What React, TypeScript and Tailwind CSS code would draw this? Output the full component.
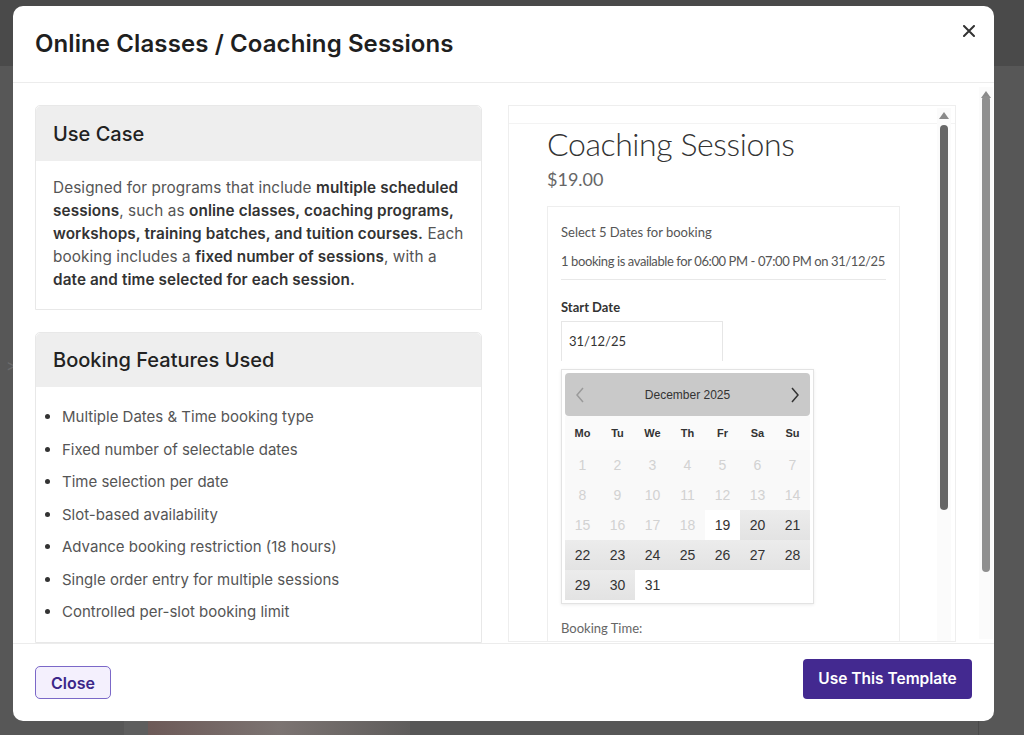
import React from 'react';

const features = [
  'Multiple Dates & Time booking type',
  'Fixed number of selectable dates',
  'Time selection per date',
  'Slot-based availability',
  'Advance booking restriction (18 hours)',
  'Single order entry for multiple sessions',
  'Controlled per-slot booking limit',
];

type Cell = { d?: number; kind: 'off' | 'open' | 'avail' | 'empty' };

const calendarRows: Cell[][] = [
  [1, 2, 3, 4, 5, 6, 7].map(d => ({ d, kind: 'off' as const })),
  [8, 9, 10, 11, 12, 13, 14].map(d => ({ d, kind: 'off' as const })),
  [
    { d: 15, kind: 'off' },
    { d: 16, kind: 'off' },
    { d: 17, kind: 'off' },
    { d: 18, kind: 'off' },
    { d: 19, kind: 'open' },
    { d: 20, kind: 'avail' },
    { d: 21, kind: 'avail' },
  ],
  [22, 23, 24, 25, 26, 27, 28].map(d => ({ d, kind: 'avail' as const })),
  [
    { d: 29, kind: 'avail' },
    { d: 30, kind: 'avail' },
    { d: 31, kind: 'open' },
    { kind: 'empty' },
    { kind: 'empty' },
    { kind: 'empty' },
    { kind: 'empty' },
  ],
];

const cellClass: Record<Cell['kind'], string> = {
  off: 'bg-[#f9f9f9] text-[#d2d2d2]',
  open: 'bg-white text-[#333]',
  avail: 'bg-gradient-to-b from-[#ececec] to-[#e3e3e3] text-[#333]',
  empty: 'bg-white',
};

// fake scrollbar, drawn to match the screenshot
const ScrollBar: React.FC<{ thumbTop: number; thumbHeight: number; color: string; height: number }> = ({
  thumbTop,
  thumbHeight,
  color,
  height,
}) => (
  <div className="relative w-[14px] shrink-0 bg-[#fbfbfb]" style={{ height }}>
    <svg className="absolute left-[2px] top-[4px]" width="10" height="7" viewBox="0 0 10 7">
      <path d="M5 0 L10 7 L0 7 Z" fill="#8a8a8a" />
    </svg>
    <div className={`absolute left-[3px] w-[8px] rounded-full ${color}`} style={{ top: thumbTop, height: thumbHeight }} />
  </div>
);

const BookingPreview: React.FC = () => (
  <div className="relative h-[537px] w-[448px] shrink-0 overflow-hidden border border-[#eeeeee] bg-white">
    <div className="h-[18px] border-b border-[#f3f3f3]" />
    <div className="pl-[38px] font-['Lato',sans-serif]">
      <h2 className="text-[32px] font-light leading-[40px] tracking-[-0.4px] text-[#333]">Coaching Sessions</h2>
      <p className="mt-[2px] text-[18px] leading-[26px] text-[#666]">$19.00</p>

      <div className="mt-[14px] w-[353px] border border-[#eeeeee] px-[13px] pt-[15px] pb-4 text-[13px]">
        <p className="leading-[20px] text-[#555]">Select 5 Dates for booking</p>
        <p className="mt-[9px] whitespace-nowrap leading-[20px] tracking-[-0.4px] text-[#555]">
          1 booking is available for 06:00 PM - 07:00 PM on 31/12/25
        </p>
        <div className="mt-[8px] border-b border-[#e8e8e8]" />

        <p className="mt-[17px] font-bold leading-[20px] text-[#333]">Start Date</p>
        <div className="mt-[4px] h-[40px] w-[162px] border border-b-0 border-[#e6e6e6] pl-[7px] pt-[10px] text-[#333]">31/12/25</div>

        <div className="mt-[8px] w-[253px] border border-[#e3e3e3] bg-white p-[3px] shadow-[0_1px_3px_rgba(0,0,0,0.08)] font-['Liberation_Sans',Arial,sans-serif]">
          <div className="flex h-[43px] items-center justify-between rounded-[4px] bg-[#c9c9c9] px-[10px]">
            <svg width="10" height="16" viewBox="0 0 10 16">
              <path d="M8 1 L2 8 L8 15" fill="none" stroke="#9a9a9a" strokeWidth="1.5" />
            </svg>
            <span className="text-[12px] text-[#333]">December 2025</span>
            <svg width="10" height="16" viewBox="0 0 10 16">
              <path d="M2 1 L8 8 L2 15" fill="none" stroke="#333" strokeWidth="1.5" />
            </svg>
          </div>
          <div className="grid grid-cols-7">
            {['Mo', 'Tu', 'We', 'Th', 'Fr', 'Sa', 'Su'].map(d => (
              <div key={d} className="flex h-[34px] items-center justify-center bg-[#fafafa] text-[11px] font-bold text-[#333]">
                {d}
              </div>
            ))}
            {calendarRows.flat().map((c, i) => (
              <div
                key={i}
                className={`flex h-[30px] items-center justify-center text-[14px] ${cellClass[c.kind]}`}
              >
                {c.d}
              </div>
            ))}
          </div>
        </div>

        <p className="mt-[14px] leading-[20px] text-[#666]">Booking Time:</p>
      </div>
    </div>

    <div className="absolute right-[4px] top-[2px]">
      <ScrollBar thumbTop={17} thumbHeight={385} color="bg-[#676767]" height={540} />
    </div>
  </div>
);

const App: React.FC = () => {
  return (
    <div className="relative h-[735px] w-full overflow-hidden bg-[#575757] font-['Inter',sans-serif]">
      {/* dimmed page behind the dialog */}
      <div className="h-[66px] bg-[#4a4a4a]" />
      <div className="absolute left-[6px] top-[353px] text-[16px] text-[#6b6b6b]">&gt;</div>
      <div className="absolute left-[124px] top-[721px] h-[14px] w-[286px] bg-[#5e5e5e]">
        <div className="ml-[24px] h-full w-[262px] bg-gradient-to-r from-[#6d5a58] via-[#7c7472] to-[#5f5d5c]" />
      </div>
      <div className="absolute left-[978px] top-[721px] h-[14px] w-px bg-[#4a4a4a]" />

      {/* dialog */}
      <div className="absolute left-[13px] top-[6px] flex h-[715px] w-[981px] flex-col rounded-[10px] bg-white">
        <div className="flex h-[77px] shrink-0 items-center justify-between border-b border-[#ececec] pl-[22px] pr-[19px]">
          <h1 className="text-[24px] font-semibold tracking-[0.1px] text-[#1f1f1f]">Online Classes / Coaching Sessions</h1>
          <svg className="mt-[19px] self-start" width="12" height="12" viewBox="0 0 12 12">
            <path d="M1 1 L11 11 M11 1 L1 11" stroke="#333" strokeWidth="2" strokeLinecap="round" />
          </svg>
        </div>

        <div className="flex h-[560px] shrink-0 overflow-hidden">
          <div className="flex flex-1 gap-[26px] pl-[22px] pt-[22px]">
            <div className="flex w-[447px] shrink-0 flex-col gap-[22px]">
              <div className="rounded-t-[5px] border border-[#e8e8e8]">
                <div className="flex h-[55px] items-center rounded-t-[5px] bg-[#eeeeee] px-[17px]">
                  <h3 className="text-[20px] font-medium text-[#222]">Use Case</h3>
                </div>
                <p className="px-[17px] pt-[15px] pb-[18px] text-[15.3px] leading-[23px] tracking-[0.1px] text-[#555]">
                  Designed for programs that include <b className="font-semibold text-[#333]">multiple scheduled</b>
                  <br />
                  <b className="font-semibold text-[#333]">sessions</b>, such as <b className="font-semibold text-[#333]">online classes, coaching programs,</b>
                  <br />
                  <b className="font-semibold text-[#333]">workshops, training batches, and tuition courses.</b> Each
                  <br />
                  booking includes a <b className="font-semibold text-[#333]">fixed number of sessions</b>, with a
                  <br />
                  <b className="font-semibold text-[#333]">date and time selected for each session.</b>
                </p>
              </div>

              <div className="h-[400px] rounded-t-[5px] border border-[#e8e8e8]">
                <div className="flex h-[54px] items-center rounded-t-[5px] bg-[#eeeeee] px-[17px]">
                  <h3 className="text-[20px] font-medium text-[#222]">Booking Features Used</h3>
                </div>
                <ul className="list-disc pl-[26px] pt-[19px] text-[15px] leading-[22px] text-[#555] marker:text-[#333]">
                  {features.map(f => (
                    <li key={f} className="mb-[10.5px]">
                      {f}
                    </li>
                  ))}
                </ul>
              </div>
            </div>

            <BookingPreview />
          </div>

          <div className="mr-[1px] pt-[4px]">
            <ScrollBar thumbTop={9} thumbHeight={476} color="bg-[#8f8f8f]" height={552} />
            <svg className="-mt-[14px] ml-[2px]" width="10" height="7" viewBox="0 0 10 7">
              <path d="M0 0 L10 0 L5 7 Z" fill="#8a8a8a" />
            </svg>
          </div>
        </div>

        <div className="flex flex-1 items-end justify-between border-t border-[#ececec] px-[22px] pb-[22px]">
          <button className="h-[33px] w-[76px] rounded-[5px] border border-[#7b68c8] bg-[#f4f0fd] text-[16px] font-semibold text-[#3b2689]">
            Close
          </button>
          <button className="h-[40px] w-[169px] rounded-[4px] bg-[#432990] text-[15.5px] font-semibold text-white">
            Use This Template
          </button>
        </div>
      </div>
    </div>
  );
};

export default App;
